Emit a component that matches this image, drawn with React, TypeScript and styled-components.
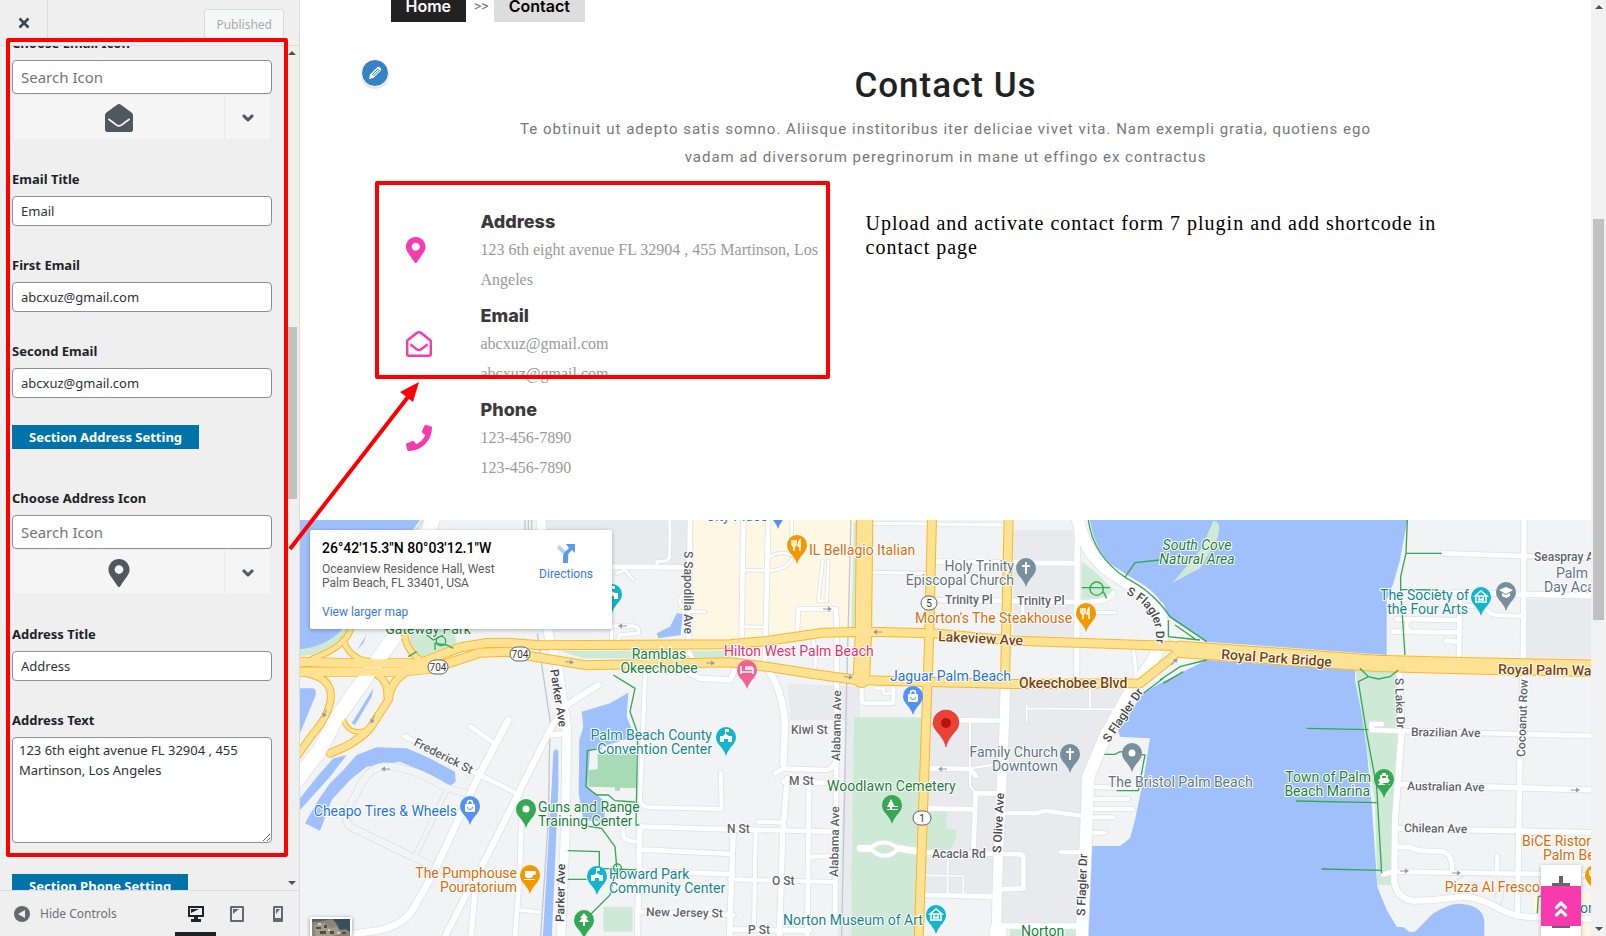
import React from "react";
import styled, { createGlobalStyle } from "styled-components";
import {
  FaAngleDoubleUp,
  FaChevronDown,
  FaEnvelopeOpen,
  FaMapMarkerAlt,
  FaPhone,
  FaRegEnvelopeOpen,
} from "react-icons/fa";

const GlobalStyle = createGlobalStyle`
  *, *::before, *::after { box-sizing: border-box; }
  body { margin: 0; background: #fff; overflow: hidden; }
  button, input, textarea { font: inherit; margin: 0; }
  h1, h2, h3, p { margin: 0; }
`;

const uiFont = `"Noto Sans", "Open Sans", sans-serif`;

/* ---------- Shell ---------- */

const Shell = styled.div`
  position: relative;
  display: flex;
  height: 100vh;
  overflow: hidden;
`;

const Sidebar = styled.aside`
  flex: 0 0 300px;
  display: flex;
  flex-direction: column;
  background: #efefef;
  border-right: 1px solid #dcdcde;
  font-family: ${uiFont};
  color: #1d2327;
`;

const Topbar = styled.header`
  flex: 0 0 46px;
  display: flex;
  justify-content: space-between;
  border-bottom: 1px solid #dcdcde;
`;

const CloseButton = styled.button`
  display: flex;
  align-items: center;
  justify-content: center;
  width: 48px;
  border: 0;
  border-right: 1px solid #dcdcde;
  background: transparent;
  color: #3c434a;
`;

const PublishButton = styled.button`
  align-self: flex-start;
  height: 30px;
  margin: 9px 15px 0 0;
  padding: 0 11px;
  border: 1px solid #dcdcde;
  border-radius: 3px;
  background: #f6f7f7;
  color: #a7aaad;
  font-size: 12px;
`;

const SidebarBody = styled.div`
  flex: 1;
  min-height: 0;
  display: flex;
`;

const Panel = styled.form`
  flex: 1;
  min-width: 0;
  overflow: hidden;
  padding: 0 12px;
`;

const Controls = styled.div`
  display: flex;
  flex-direction: column;
  gap: 29px;
  margin-top: -13px;
`;

const Field = styled.div`
  display: flex;
  flex-direction: column;
`;

const Label = styled.label`
  height: 27px;
  line-height: 20px;
  font-size: 13px;
  font-weight: 700;
`;

const TextInput = styled.input<{ $tall?: boolean }>`
  height: ${(p) => (p.$tall ? 34 : 30)}px;
  padding: 0 8px;
  border: 1px solid #8c8f94;
  border-radius: 4px;
  background: #fff;
  color: #2c3338;
  font-size: ${(p) => (p.$tall ? 15 : 13)}px;
  &::placeholder { color: #757575; opacity: 1; }
`;

const TextArea = styled.textarea`
  height: 106px;
  padding: 2px 6px;
  border: 1px solid #8c8f94;
  border-radius: 4px;
  color: #2c3338;
  font-size: 13px;
  line-height: 20px;
  resize: vertical;
`;

const Picker = styled.div`
  display: flex;
  height: 46px;
  margin: 0 1px;
  background: #f5f5f5;
  border: 1px solid #eee;
  color: #50575e;
`;

const PickerCurrent = styled.div`
  flex: 1;
  display: flex;
  align-items: center;
  justify-content: center;
  padding-top: 2px;
  font-size: 28px;
`;

const PickerToggle = styled.button`
  width: 46px;
  padding: 4px 0 0;
  border: 0;
  border-left: 1px solid #eaeaea;
  background: transparent;
  color: #50575e;
  font-size: 12px;
  svg { stroke: currentColor; stroke-width: 48; overflow: visible; }
`;

const SectionTitle = styled.h3<{ $last?: boolean }>`
  align-self: flex-start;
  margin: ${(p) => (p.$last ? "2px 0 0" : "-2px 0 10px")};
  padding: 0 17px;
  background: #0073aa;
  color: #fff;
  font-size: 13px;
  line-height: 24px;
  font-weight: 700;
`;

const Footer = styled.footer`
  flex: 0 0 46px;
  display: flex;
  align-items: stretch;
  justify-content: space-between;
  border-top: 1px solid #dcdcde;
`;

const HideButton = styled.button`
  display: flex;
  align-items: center;
  gap: 10px;
  padding: 0 0 0 14px;
  border: 0;
  background: transparent;
  color: #6b7177;
  font-size: 12px;
`;

const Devices = styled.div`
  display: flex;
  margin-right: 1px;
`;

const DeviceButton = styled.button<{ $active?: boolean }>`
  display: flex;
  align-items: center;
  justify-content: center;
  width: 41px;
  padding: 4px 0 0;
  border: 0;
  border-bottom: 4px solid ${(p) => (p.$active ? "#1d2327" : "transparent")};
  background: transparent;
  color: ${(p) => (p.$active ? "#1d2327" : "#646970")};
`;

/* ---------- Scroll bars ---------- */

const Scrollbar = styled.div<{ $track: string }>`
  flex: 0 0 15px;
  display: flex;
  flex-direction: column;
  align-items: center;
  background: ${(p) => p.$track};
`;

const ScrollArrow = styled.span<{ $down?: boolean }>`
  width: 0;
  height: 0;
  margin: ${(p) => (p.$down ? "0 0 5px" : "5px 0 0")};
  border: 4px solid transparent;
  border-top: ${(p) => (p.$down ? "4px solid #505050" : "0")};
  border-bottom: ${(p) => (p.$down ? "0" : "4px solid #505050")};
`;

const ScrollSpace = styled.span<{ $grow: number }>`
  flex: ${(p) => p.$grow} 0 0;
`;

const ScrollThumb = styled.span<{ $grow: number }>`
  flex: ${(p) => p.$grow} 0 0;
  width: 11px;
  background: #c1c1c1;
`;

/* ---------- Preview ---------- */

const Preview = styled.main`
  flex: 1;
  min-width: 0;
  display: flex;
  flex-direction: column;
  background: #fff;
`;

const Page = styled.div`
  position: relative;
  width: 100%;
  max-width: 1170px;
  margin: 0 auto;
  padding: 0 30px;
`;

const Breadcrumb = styled.nav`
  display: flex;
  align-items: center;
  height: 34px;
  margin-top: -12px;
  color: #777;
  font: 14px Roboto, sans-serif;
`;

const Crumb = styled.a<{ $dark?: boolean }>`
  padding: 2px 15px 0;
  background: ${(p) => (p.$dark ? "#222" : "#ddd")};
  color: ${(p) => (p.$dark ? "#fff" : "#000")};
  font: 600 16px/32px Inter, sans-serif;
  text-decoration: none;
`;

const CrumbMark = styled.span`
  padding: 2px 5px 0 8px;
`;

const EditButton = styled.button`
  position: absolute;
  top: 59px;
  left: 0;
  display: flex;
  align-items: center;
  justify-content: center;
  width: 28px;
  height: 28px;
  padding: 0;
  border: 1px solid #fff;
  border-radius: 50%;
  background: #3582c4;
  box-shadow: 0 2px 1px rgba(60, 67, 74, 0.15);
  color: #fff;
`;

const Intro = styled.section`
  max-width: 900px;
  margin: 0 auto;
  padding-top: 44px;
  text-align: center;
  font-family: Roboto, sans-serif;
`;

const Title = styled.h1`
  color: #222;
  font-size: 35px;
  line-height: 40px;
  font-weight: 500;
  letter-spacing: 1px;
`;

const Lead = styled.p`
  margin-top: 9px;
  color: #777;
  font-size: 15px;
  line-height: 28px;
  letter-spacing: 1px;
`;

const Columns = styled.div`
  display: grid;
  grid-template-columns: 430px 1fr;
  gap: 30px;
  padding: 30px 15px 37px;
`;

const InfoItem = styled.article`
  display: grid;
  grid-template-columns: 75px 1fr;
`;

const InfoIcon = styled.span`
  padding-top: 36px;
  color: #f73baf;
  font-size: 26px;
  line-height: 0;
`;

const InfoTitle = styled.h2`
  margin-top: 8px;
  color: #3a3a3a;
  font: 800 18px/26px Inter, sans-serif;
`;

const InfoText = styled.p`
  color: #999;
  font: 16px/30px "Liberation Serif", serif;
`;

const Notice = styled.p`
  padding-top: 10px;
  color: #000;
  font: 20px/24px "Liberation Serif", serif;
  letter-spacing: 1px;
`;

const MapArea = styled.section`
  position: relative;
  flex: 1;
  min-height: 0;
  overflow: hidden;
  background: #f1f3f4;
  font-family: Roboto, sans-serif;
`;

const MapSvg = styled.svg`
  display: block;
  width: 100%;
  height: 100%;
`;

const MapCard = styled.div`
  position: absolute;
  top: 10px;
  left: 10px;
  display: flex;
  justify-content: space-between;
  width: 302px;
  height: 99px;
  padding: 8px 19px 0 12px;
  border-radius: 2px;
  background: #fff;
  box-shadow: 0 1px 4px rgba(0, 0, 0, 0.3);
  color: #5b5b5b;
  font-size: 12px;
  line-height: 14px;
`;

const CardTitle = styled.h3`
  color: #000;
  font-size: 14px;
  line-height: 20px;
  font-weight: 500;
`;

const CardText = styled.p`
  width: 180px;
  margin: 4px 0 15px;
`;

const CardLink = styled.a`
  color: #3a76e3;
  text-decoration: none;
`;

const DirectionsLink = styled(CardLink)`
  display: flex;
  flex-direction: column;
  align-items: center;
  gap: 4px;
  padding-top: 5px;
`;

const Thumbnail = styled.svg`
  position: absolute;
  left: 10px;
  bottom: 0;
  border: 2px solid #fff;
  border-bottom: 0;
  box-shadow: 0 1px 4px rgba(0, 0, 0, 0.4);
`;

const ZoomBox = styled.div`
  position: absolute;
  right: 10px;
  bottom: 0;
  width: 40px;
  height: 71px;
  background: #fff;
  box-shadow: 0 1px 4px rgba(0, 0, 0, 0.3);
`;

const BackToTop = styled.button`
  position: absolute;
  right: 10px;
  bottom: 10px;
  display: flex;
  align-items: center;
  justify-content: center;
  width: 40px;
  height: 40px;
  padding: 5px 0 0;
  border: 0;
  background: #f73baf;
  color: #fff;
  font-size: 20px;
`;

const Annotations = styled.svg`
  position: absolute;
  inset: 0;
  width: 100%;
  height: 100%;
  pointer-events: none;
`;

/* ---------- Map data (three units to a pixel) ---------- */

type Road = [number, string];

const WHITE_ROADS: Road[] = [
  [44, "M400 -10 L290 340 L100 610 L60 690 L-10 780"],
  [26, "M722 -10 L745 340 L775 450 L800 620 L797 900 L783 1260"],
  [14, "M900 140 L1165 142"],
  [14, "M1170 -10 L1165 400"],
  [8, "M1108 -10 Q1112 40 1108 110 Q1110 125 1070 125 V140"],
  [8, "M950 160 L975 150 L1000 180 M975 150 L975 142"],
  [10, "M935 370 V318 H1000 Q1020 320 1015 340 L960 345 L950 370"],
  [8, "M1165 275 H1215 M1165 220 Q1135 225 1140 250 Q1145 268 1165 272"],
  [16, "M1170 460 L1200 475 L1290 480 L1305 450"],
  [12, "M1170 400 L1190 440"],
  [14, "M315 650 L540 765 L660 825"],
  [14, "M512 620 L580 668"],
  [20, "M625 600 L530 780 L400 1060 L335 1175 Q300 1220 230 1232 L150 1243"],
  [18, "M895 495 L800 555 L755 620 L650 830 L550 1030 L500 1120 L430 1260"],
  [14, "M655 840 L664 900 L660 1040 L645 1260"],
  [16, "M528 1080 L512 1260"],
  [10, "M660 1170 L718 1176"],
  [16, "M755 645 L800 640"],
  [12, "M1035 460 L1030 610 L1020 840 Q1022 860 1050 862 L1265 867 L1262 760"],
  [16, "M1020 920 L1012 1260"],
  [16, "M1300 930 L1288 1260"],
  [14, "M1020 920 L1300 928 L1600 935"],
  [14, "M1015 988 L1295 1002"],
  [14, "M1015 1052 L1300 1063"],
  [12, "M970 910 V950 Q975 963 1015 966"],
  [14, "M1015 1176 L1300 1185"],
  [12, "M1290 1078 L1605 1086"],
  [14, "M1290 1228 L1530 1232"],
  [20, "M1390 430 Q1450 500 1455 620 L1450 730"],
  [16, "M1462 775 L1448 940 L1438 1260"],
  [14, "M1527 790 L1522 1260"],
  [12, "M1367 940 L1362 1220"],
  [12, "M1298 940 L1292 1250"],
  [14, "M1425 760 L1450 746 L1580 750 Q1608 745 1610 700"],
  [14, "M1450 785 L1612 790"],
  [14, "M1610 290 V600 L1605 1200"],
  [12, "M1374 905 L1450 908"],
  [12, "M1530 1010 L1605 1008"],
  [14, "M1330 -10 L1325 350"],
  [14, "M1405 -10 L1395 430"],
  [8, "M1325 150 L1405 152 Q1460 150 1475 118 M1405 112 Q1440 90 1475 105 V0"],
  [8, "M1325 320 L1400 322"],
  [12, "M1492 335 L1495 267 H1608 V340"],
  [8, "M1555 240 L1568 122 M1580 240 L1585 122 M1555 242 H1580"],
  [10, "M1540 365 L1548 430 L1535 470"],
  [10, "M1710 157 L1880 160"],
  [14, "M1900 125 L2330 130"],
  [14, "M1900 240 L2330 246 Q2420 250 2440 220"],
  [10, "M2168 245 V280"],
  [10, "M1700 10 L1890 12 L2110 15"],
  [10, "M2360 278 H2445"],
  [36, "M2330 -20 Q2350 100 2430 155 L2500 200 Q2595 250 2588 350 Q2570 420 2500 500 L2420 640 L2365 770 L2360 900 L2345 1260"],
  [16, "M2332 0 L2330 480"],
  [10, "M2500 385 L2510 480"],
  [28, "M2116 500 L2112 640 L2095 1000 L2088 1260"],
  [14, "M1880 600 L2105 602"],
  [14, "M1885 745 L2010 747 L2028 768"],
  [6, "M2010 600 V745 M2010 745 L2080 735 M2010 747 V800 L2025 817"],
  [14, "M1885 865 L2020 868"],
  [14, "M2090 820 L2027 820 L2020 995"],
  [14, "M1870 997 L2160 1003 Q2170 1003 2170 1015 V1105 L2100 1108"],
  [5, "M1943 1010 V1125 M1870 1066 L1990 1068 V1125"],
  [12, "M2110 880 L2210 880 L2235 872 L2365 890"],
  [14, "M1870 1125 L2080 1130"],
  [12, "M2282 997 H2355"],
  [16, "M2110 1218 H2345"],
  [50, "M2094 1230 V1260"],
  [12, "M2370 800 L2490 805 M2370 837 H2485 M2380 867 H2500 M2380 892 H2440 M2370 938 H2415"],
  [20, "M1680 985 H1710 M1800 986 L1850 993"],
  [12, "M1710 985 Q1750 950 1795 985 Q1755 1030 1710 985 Z"],
  [12, "M1685 490 V540 Q1685 550 1695 550 H1780 V495"],
  [8, "M1725 505 H1750 V520 H1770"],
  [5, "M2180 555 V605 M2180 565 L2450 568 M2370 500 V565"],
  [16, "M3672 -10 L3670 420 L3660 710 L3652 1190"],
  [14, "M3430 100 L3880 115"],
  [16, "M3460 218 L3880 228"],
  [14, "M3480 230 L3477 405"],
  [12, "M3490 258 L3550 258 Q3570 285 3590 286 L3665 288"],
  [14, "M3290 297 L3470 300 M3278 335 L3470 337 M3438 362 L3470 365"],
  [10, "M3330 297 Q3310 315 3330 335"],
  [18, "M3298 455 L3305 630 L3285 900 L3283 1090 Q3295 1138 3340 1142 L3400 1140 L3490 1130 Q3540 1132 3600 1167 Q3640 1190 3700 1192 L3880 1198"],
  [14, "M3245 612 H3215 V630 L3300 633 L3880 648"],
  [16, "M3300 793 L3880 810"],
  [16, "M3290 925 L3880 938"],
  [14, "M3290 980 L3330 982 L3360 992 L3430 995 Q3458 1005 3456 1050"],
  [14, "M3250 1063 L3285 1055 L3730 1062 L3880 1066"],
  [12, "M3592 1008 L3590 1055"],
];

const FAINT_ROADS: Road[] = [
  [20, "M500 820 L440 805 Q330 735 250 740 Q200 745 170 820 Q120 890 150 920 L400 1040 L510 1085"],
  [12, "M440 810 L345 1010"],
  [20, "M3460 1120 Q3480 1060 3560 1080 Q3620 1090 3590 1150"],
];

const YELLOW_ROADS: Road[] = [
  [14, "M155 320 Q140 380 40 415 M130 360 Q150 420 215 425"],
  [16, "M315 335 Q310 380 360 420"],
  [18, "M20 460 Q100 475 92 540 Q85 590 40 640 L-10 710"],
  [18, "M225 460 Q265 480 262 530"],
  [20, "M310 462 Q270 490 265 540 L210 625 Q170 670 90 700"],
  [10, "M130 600 Q150 650 200 630"],
  [24, "M-10 425 L150 430 L360 430 L480 382 L560 369 L620 368 L720 376 L1290 373 L1400 363 L1570 338 L1700 335 L1900 340 L2140 362 L2330 368 L2620 378"],
  [24, "M-10 455 L300 455 L400 445 L540 398 L620 395 L700 410 L860 436 L1290 427 L1400 440 L1540 462 L1670 480 L1890 486 L2140 492 L2520 490 L2620 410"],
  [46, "M1694 -10 L1690 350 L1684 478"],
  [24, "M1896 -10 L1887 370 L1875 700 L1856 1260"],
  [24, "M2126 -10 L2115 490"],
  [46, "M2640 388 L3230 430 L3480 437 L3880 445"],
];

const GREEN_PATHS = [
  "M2365 0 Q2380 110 2480 175 Q2560 215 2610 290 L2720 365 M2475 172 L2505 128 L2580 120 M2345 203 H2430 M2410 215 L2420 235",
  "M3322 0 L3318 100 L3302 170 V210 L3315 405 M3318 100 H3425 M3302 208 L3415 210",
  "M3180 445 L3205 470 L3235 477 L3270 470 L3295 450 M3205 470 L3175 485 L3200 640 L3230 800 L3245 1060",
  "M3020 625 L3205 629 M2988 843 L3230 848 M3065 1047 L3245 1051",
  "M940 465 L1005 505 L990 575 L1013 640 L1008 915 H1018",
  "M905 685 L862 692 L858 800 L890 825 H925 L945 842 L1005 846",
  "M840 915 L905 925 L945 980 L950 1040 L930 1125 L870 1185 M803 992 L898 995 V1045 L1010 1050 M803 1078 H860",
  "M380 345 L400 360 L430 345 M405 390 V370 L440 375 L460 385 M325 410 L350 395",
  "M2605 300 V350 L2700 360 M2625 315 L2690 360 M2580 480 L2640 440 L2720 420 M2590 490 L2650 455 M2530 520 L2590 475",
  "M2413 703 H2445 L2460 695 L2535 705 L2515 812 H2450",
  "M3712 1180 L3715 1130 L3740 1125",
];

/* ---------- Map labels and pins (pixels) ---------- */

const TONES = {
  green: "#188038",
  teal: "#12868f",
  blue: "#1f73e0",
  orange: "#d56e0c",
  slate: "#5b7683",
  pink: "#e2306c",
  road: "#5f6368",
  dark: "#45494d",
  brown: "#7a4208",
};

type Label = {
  t: string;
  x: number;
  y: number;
  c: keyof typeof TONES;
  a?: "middle" | "end";
  r?: number;
  s?: number;
  i?: boolean;
};

const LABELS: Label[] = [
  { t: "Gateway Park", x: 128, y: 114, c: "green", a: "middle" },
  { t: "Ramblas", x: 359, y: 139, c: "green", a: "middle" },
  { t: "Okeechobee", x: 359, y: 153, c: "green", a: "middle" },
  { t: "City Place", x: 406, y: 1, c: "blue" },
  { t: "IL Bellagio Italian", x: 509, y: 35, c: "orange" },
  { t: "Holy Trinity", x: 714, y: 51, c: "slate", a: "end" },
  { t: "Episcopal Church", x: 714, y: 65, c: "slate", a: "end" },
  { t: "Trinity Pl", x: 645, y: 84, c: "road", s: 12 },
  { t: "Trinity Pl", x: 717, y: 85, c: "road", s: 12 },
  { t: "Morton's The Steakhouse", x: 615, y: 103, c: "orange" },
  { t: "Lakeview Ave", x: 638, y: 121, c: "brown", r: 3, s: 14 },
  { t: "Hilton West Palm Beach", x: 424, y: 136, c: "pink" },
  { t: "Jaguar Palm Beach", x: 590, y: 161, c: "blue" },
  { t: "Okeechobee Blvd", x: 719, y: 168, c: "brown", s: 14 },
  { t: "S Sapodilla Ave", x: 384, y: 31, c: "road", r: 90, s: 12 },
  { t: "Parker Ave", x: 250, y: 150, c: "dark", r: 81, s: 12 },
  { t: "Parker Ave", x: 264, y: 402, c: "dark", r: -89, s: 12 },
  { t: "Frederick St", x: 113, y: 225, c: "road", r: 27, s: 12 },
  { t: "Palm Beach County", x: 412, y: 220, c: "teal", a: "end" },
  { t: "Convention Center", x: 412, y: 234, c: "teal", a: "end" },
  { t: "Cheapo Tires & Wheels", x: 157, y: 296, c: "blue", a: "end" },
  { t: "Guns and Range", x: 238, y: 292, c: "green" },
  { t: "Training Center", x: 238, y: 306, c: "green" },
  { t: "The Pumphouse", x: 217, y: 358, c: "orange", a: "end" },
  { t: "Pouratorium", x: 217, y: 372, c: "orange", a: "end" },
  { t: "Howard Park", x: 309, y: 359, c: "teal" },
  { t: "Community Center", x: 309, y: 373, c: "teal" },
  { t: "New Jersey St", x: 346, y: 396, c: "road", s: 12, r: 1 },
  { t: "Kiwi St", x: 491, y: 214, c: "road", s: 12 },
  { t: "M St", x: 489, y: 265, c: "road", s: 12 },
  { t: "N St", x: 427, y: 313, c: "road", s: 12 },
  { t: "O St", x: 472, y: 365, c: "road", s: 12 },
  { t: "P St", x: 448, y: 414, c: "road", s: 12 },
  { t: "Alabama Ave", x: 540, y: 241, c: "road", s: 12, r: -89 },
  { t: "Alabama Ave", x: 538, y: 357, c: "road", s: 12, r: -89 },
  { t: "Woodlawn Cemetery", x: 527, y: 271, c: "green" },
  { t: "Family Church", x: 758, y: 237, c: "slate", a: "end" },
  { t: "Downtown", x: 758, y: 251, c: "slate", a: "end" },
  { t: "The Bristol Palm Beach", x: 808, y: 267, c: "slate" },
  { t: "S Flagler Dr", x: 785, y: 396, c: "dark", s: 12, r: -88 },
  { t: "S Flagler Dr", x: 809, y: 223, c: "dark", s: 12, r: -56 },
  { t: "S Olive Ave", x: 701, y: 333, c: "dark", s: 12, r: -87 },
  { t: "Acacia Rd", x: 632, y: 338, c: "road", s: 12 },
  { t: "Norton Museum of Art", x: 483, y: 405, c: "teal" },
  { t: "Norton", x: 721, y: 416, c: "green" },
  { t: "South Cove", x: 897, y: 30, c: "green", a: "middle", i: true },
  { t: "Natural Area", x: 897, y: 44, c: "green", a: "middle", i: true },
  { t: "The Society of", x: 1169, y: 80, c: "teal", a: "end" },
  { t: "the Four Arts", x: 1168, y: 94, c: "teal", a: "end" },
  { t: "Seaspray Ave", x: 1234, y: 41, c: "road", s: 12 },
  { t: "Palm Beach", x: 1256, y: 58, c: "slate" },
  { t: "Day Academy", x: 1244, y: 72, c: "slate" },
  { t: "Royal Park Bridge", x: 921, y: 139, c: "brown", r: 4, s: 14 },
  { t: "Royal Palm Way", x: 1198, y: 154, c: "brown", r: 1, s: 14 },
  { t: "S Lake Dr", x: 1095, y: 158, c: "road", r: 88, s: 12 },
  { t: "Cocoanut Row", x: 1225, y: 237, c: "road", r: -88, s: 12 },
  { t: "Brazilian Ave", x: 1111, y: 216, c: "road", s: 12, r: 1 },
  { t: "Australian Ave", x: 1107, y: 270, c: "road", s: 12, r: 1 },
  { t: "Chilean Ave", x: 1104, y: 312, c: "road", s: 12, r: 1 },
  { t: "Town of Palm", x: 1071, y: 262, c: "green", a: "end" },
  { t: "Beach Marina", x: 1070, y: 276, c: "green", a: "end" },
  { t: "BiCE Ristorante", x: 1222, y: 326, c: "orange" },
  { t: "Palm Beach", x: 1243, y: 340, c: "orange" },
  { t: "Pizza Al Fresco", x: 1240, y: 372, c: "orange", a: "end" },
  { t: "orth", x: 1280, y: 393, c: "teal" },
];

const GLYPHS = {
  fork: <path d="M-5 -5v4q0 2 2 2v5M-3 -5v5M-1 -5v4q0 2-2 2M3 6V-5q-2 2-2 6h2" fill="none" stroke="#fff" strokeWidth="1.5" />,
  cross: <path d="M0 -6V6M-4 -2H4" stroke="#fff" strokeWidth="2" />,
  bed: <path d="M-6 -4V4M-6 2H6V-1H-1V-3H4Q6 -3 6 0V4" fill="none" stroke="#fff" strokeWidth="1.5" />,
  bag: (
    <g>
      <rect x="-5" y="-2" width="10" height="8" rx="1" fill="#fff" />
      <path d="M-2.500 -1V-3a2.500 2.500 0 0 1 5 0v2" fill="none" stroke="#fff" strokeWidth="1.500" />
      <path d="M-2.500 1a2.500 2.500 0 0 0 5 0" fill="none" stroke="#5491f5" />
    </g>
  ),
  hall: <path d="M-1 -8H3V-5H0V-3L3 -1H6V5H2V2H-2V5H-6V-1H-3L-1 -3Z" fill="#fff" />,
  museum: <path d="M-6 -1L0 -6L6 -1ZM-5 5V-1M5 5V-1M-6 5H6M-2 4V1L0 3L2 1V4" fill="none" stroke="#fff" strokeWidth="1.5" />,
  cup: <path d="M-5 -4H5Q7 -3 5 0H3Q3 3 0 3H-2Q-5 3 -5 0ZM-6 4H5V5H-6Z" fill="#fff" />,
  tree: <path d="M0 -7L4 -2H2L5 2H1V6H-1V2H-5L-2 -2H-4Z" fill="#fff" />,
  park: <path d="M-1 -6L3 2H0V4H6V5H-5V4H-2V2H-5ZM2 1H6V2H2Z" fill="#fff" />,
  school: <path d="M0 -5L7 -2L0 2L-7 -2ZM-4 1V4L0 6L4 4V1L0 3ZM6 -2V3" fill="#fff" />,
  ship: <path d="M-2 -6H2V-4H4V0L6 1L4 4H-4L-6 1L-4 0V-4H-2ZM-6 5Q-3 3 0 5T6 5V6H-6ZM-2 -3V-1H2V-3Z" fill="#fff" fillRule="evenodd" />,
  dot: <circle r="3.500" fill="#fff" />,
};

type Pin = [number, number, string, keyof typeof GLYPHS];

const TEAL = "#12b5cb";
const ORANGE = "#f29900";
const BLUE = "#5491f5";
const GREY = "#78909c";
const GREEN = "#34a853";

const PINS: Pin[] = [
  [312, 74, TEAL, "hall"],
  [478, -10, BLUE, "bag"],
  [497, 25, ORANGE, "fork"],
  [726, 48, GREY, "cross"],
  [786, 93, ORANGE, "fork"],
  [447, 150, "#f06292", "bed"],
  [613, 176, BLUE, "bag"],
  [426, 217, TEAL, "hall"],
  [170, 286, BLUE, "bag"],
  [226, 289, GREEN, "dot"],
  [230, 355, ORANGE, "cup"],
  [297, 356, TEAL, "hall"],
  [284, 400, GREEN, "tree"],
  [592, 285, GREEN, "park"],
  [636, 395, TEAL, "museum"],
  [770, 234, GREY, "cross"],
  [832, 233, GREY, "dot"],
  [1181, 77, TEAL, "museum"],
  [1206, 72, GREY, "school"],
  [1084, 259, GREEN, "ship"],
  [1295, 355, ORANGE, "fork"],
];

const SHIELDS: [number, number, string, number][] = [
  [138, 147, "704", 20],
  [220, 134, "704", 20],
  [629, 83, "5", 16],
  [622, 298, "1", 18],
];

const ARROWS: [number, number, number][] = [
  [323, 106, 180],
  [269, 142, 5],
  [410, 143, 0],
  [25, 193, 115],
  [73, 199, 115],
  [86, 249, 180],
  [527, 89, 0],
  [548, 157, 8],
  [578, 112, 180],
  [643, 249, 180],
  [874, 142, -45],
  [1275, 270, 0],
  [1104, 351, 0],
  [1156, 353, 0],
];

function Roads({ roads, edge, fill, grow }: { roads: Road[]; edge: string; fill: string; grow: number }) {
  return (
    <g fill="none" strokeLinecap="round" strokeLinejoin="round">
      {roads.map(([w, d]) => (
        <path key={d} d={d} stroke={edge} strokeWidth={w + grow} />
      ))}
      {roads.map(([w, d]) => (
        <path key={`${d} fill`} d={d} stroke={fill} strokeWidth={w} />
      ))}
    </g>
  );
}

function CityMap() {
  return (
    <MapSvg viewBox="0 0 1291 416" preserveAspectRatio="xMinYMin slice" role="img" aria-label="Map of West Palm Beach">
      <g transform="scale(0.33333)">
        <rect width="3900" height="1260" fill="#f1f3f4" />
        <g fill="#e8eaed">
          <path d="M740 0H1165V140H935V100H740Z" />
          <path d="M1882 500H2490L2365 770L2360 978L2345 1210H2100V1130H1860Z" />
          <path d="M1640 592H1662L1655 1260H1612Z" />
          <path d="M1462 490L1680 500V600H1470Z" />
          <path d="M2140 30H2320V350H2140Z" />
          <path d="M3680 238H3880V415H3680Z" />
        </g>
        <path d="M1180 0H1660L1650 325L1290 365L1180 362Z" fill="#fef7e4" />
        <path d="M3700 1120H3880V1248H3740V1190H3700Z" fill="#fef7e4" />
        <g fill="#ceead6">
          <path d="M0 400V370L130 330L365 0H375L160 325Q110 405 0 408Z" />
          <path d="M330 330H460L472 375L365 415L330 395Z" />
          <path d="M780 392H1290L1288 415H850Z" />
          <path d="M1662 5H1680L1672 320H1654Z" />
          <path d="M1662 592H1868L1850 1260H1655V1085L1650 1080L1655 1060Z" />
          <path d="M1880 875H1940V925L1968 930V958L1950 990H1880Z" />
          <path d="M2345 125L2380 150L2450 220L2420 240H2345Z" />
          <rect x="910" y="1160" width="88" height="75" rx="8" />
          <path d="M2130 1210H2345V1248H2130Z" />
        </g>
        <g fill="#9fc0fb">
          <path d="M0 0H360L130 325Q80 380 0 388Z" />
          <path d="M0 505H40Q52 510 45 530L0 640Z" />
          <path d="M15 910L60 932L95 840L150 780L200 740L300 725L380 760L450 798L467 785L465 755L380 710L320 685L230 682L170 705L130 750L90 790L55 840Z" />
          <path d="M0 870V835L60 760L100 715L140 705L90 770ZM0 620L15 600H0ZM155 610L220 505L215 530L165 615ZM172 390L200 343L190 370Z" />
          <path d="M845 575L930 550L985 518L980 590L1005 650L870 690L862 800L912 842L915 905L850 900L836 820L838 660L850 620Z" />
          <path d="M760 695Q768 680 775 695V800L755 1260H728L755 800Z" />
          <path d="M1075 355L1070 340L1110 320L1130 280L1148 282L1142 345Z" />
          <path d="M2370 0H3322L3300 120L3280 190L3260 240V405L2720 365L2605 290L2590 250L2480 175Q2385 110 2370 0Z" />
          <path d="M2580 490L2720 420L3165 450V480L3195 630L3215 850L3232 1100L3260 1170L3290 1220L3310 1222L3330 1237L3345 1235L3400 1180Q3460 1145 3490 1153Q3553 1160 3553 1210V1248H2360L2370 978H2460L2490 955L2505 900L2530 780L2550 655L2460 650L2452 620L2480 590L2530 520Z" />
        </g>
        <g fill="#ceead6">
          <path d="M2740 2Q2760 5 2758 25Q2755 60 2740 80L2700 145L2618 188L2655 145L2705 85Z" />
          <path d="M3165 445L3295 455V640L3275 1095H3232L3225 850L3190 620Z" />
        </g>
        <path d="M893 700H1008V805L960 803V812H945V802L865 800V750L893 748Z" fill="#a8dab5" />
        <g fill="none" stroke="#c4c7cb" strokeWidth="4">
          <path d="M675 0V50M685 0V50M695 0V50M712 340L720 400L750 600L745 900L722 1248M1653 0L1640 500L1625 1248" />
        </g>
        <Roads roads={FAINT_ROADS} edge="#dfe1e5" fill="#f1f3f4" grow={5} />
        <Roads roads={WHITE_ROADS} edge="#dfe2e7" fill="#fff" grow={5} />
        <Roads roads={YELLOW_ROADS} edge="#fab62b" fill="#fde293" grow={6} />
        <path d="M290 340L100 610L60 690L20 742" fill="none" stroke="#fff" strokeWidth="40" />
        <g fill="none" stroke="#34a853" strokeWidth="4">
          {GREEN_PATHS.map((d) => (
            <path key={d} d={d} />
          ))}
          <circle cx="423" cy="363" r="14" />
          <circle cx="2390" cy="206" r="20" />
          <circle cx="952" cy="1044" r="12" />
        </g>
        <path d="M-10 425L150 430L360 430M-10 455L300 455L380 448" fill="none" stroke="#fde293" strokeWidth="24" />
      </g>

      {ARROWS.map(([x, y, r]) => (
        <path key={`${x}-${y}`} transform={`translate(${x} ${y}) rotate(${r})`} d="M-4 -0.500H1V-2.500L5 0L1 2.500V0.500H-4Z" fill="#9299a8" />
      ))}

      {SHIELDS.map(([x, y, t, w]) => (
        <g key={`${x}-${y}`} transform={`translate(${x} ${y})`}>
          <rect x={-w / 2} y="-7" width={w} height="14" rx="7" fill="#fff" stroke="#5f6368" />
          <text y="4" textAnchor="middle" fontSize="10" fill="#333">{t}</text>
        </g>
      ))}

      {LABELS.map((l) => (
        <text
          key={`${l.t}-${l.x}-${l.y}`}
          transform={`translate(${l.x} ${l.y}) rotate(${l.r ?? 0})`}
          textAnchor={l.a ?? "start"}
          fontSize={l.s ?? 14}
          fontWeight={l.s ? 500 : 400}
          fontStyle={l.i ? "italic" : "normal"}
          fill={TONES[l.c]}
          stroke="#fff"
          strokeWidth="2"
          strokeLinejoin="round"
          paintOrder="stroke"
        >
          {l.t}
        </text>
      ))}
      <path id="flagler-bend" d="M826 74Q858 88 856 122" fill="none" />
      <text fontSize="12" fontWeight="500" fill={TONES.dark} stroke="#fff" strokeWidth="2" paintOrder="stroke">
        <textPath href="#flagler-bend">S Flagler Dr</textPath>
      </text>

      {PINS.map(([x, y, color, glyph]) => (
        <g key={`${x}-${y}`} transform={`translate(${x} ${y})`}>
          <path d="M0 19Q-1 15 -5 10Q-10 5 -10 0A10 10 0 0 1 10 0Q10 5 5 10Q1 15 0 19Z" fill={color} />
          {GLYPHS[glyph]}
        </g>
      ))}
      <g transform="translate(646 203)">
        <path d="M0 24Q-1 18 -7 11Q-13 5 -13 0A13 13 0 0 1 13 0Q13 5 7 11Q1 18 0 24Z" fill="#ea4335" stroke="#c5221f" strokeWidth="0.500" />
        <circle r="5" fill="#b31412" />
      </g>
    </MapSvg>
  );
}

/* ---------- Small drawings ---------- */

const CloseIcon = () => (
  <svg width="12" height="12" viewBox="0 0 12 12" aria-hidden="true">
    <path d="M1.500 1.500L10.500 10.500M10.500 1.500L1.500 10.500" stroke="currentColor" strokeWidth="2.500" />
  </svg>
);

const PencilIcon = () => (
  <svg width="16" height="16" viewBox="0 0 16 16" aria-hidden="true">
    <path d="M2 14L3 9.500L10 2.500Q11.500 1 13 2.500L13.500 3Q15 4.500 13.500 6L6.500 13Z" fill="#fff" />
    <path d="M5 10L10.500 4.500M6.500 11L12 5.500M10 3.500L12.500 6" stroke="#3582c4" fill="none" />
  </svg>
);

const CollapseIcon = () => (
  <svg width="16" height="16" viewBox="0 0 16 16" aria-hidden="true">
    <circle cx="8" cy="8" r="8" fill="#646970" />
    <path d="M11 4V12L4 8Z" fill="#efefef" />
  </svg>
);

const DesktopIcon = () => (
  <svg width="16" height="16" viewBox="0 0 16 16" aria-hidden="true">
    <path d="M0 0H16V11H10V13H13V16H3V13H6V11H0ZM2 2V9H14V2Z" fill="currentColor" fillRule="evenodd" />
    <path d="M3 3H11L3 7Z" fill="currentColor" />
  </svg>
);

const TabletIcon = () => (
  <svg width="14" height="16" viewBox="0 0 14 16" aria-hidden="true">
    <path d="M1 0H13Q14 0 14 1V15Q14 16 13 16H1Q0 16 0 15V1Q0 0 1 0ZM2 2V14H12V2Z" fill="currentColor" fillRule="evenodd" />
    <path d="M3 3H9L3 8Z" fill="currentColor" />
  </svg>
);

const PhoneIcon = () => (
  <svg width="10" height="16" viewBox="0 0 10 16" aria-hidden="true">
    <path d="M1 0H9Q10 0 10 1V15Q10 16 9 16H1Q0 16 0 15V1Q0 0 1 0ZM2 2V12H8V2Z" fill="currentColor" fillRule="evenodd" />
    <path d="M3 3H7L3 8Z" fill="currentColor" />
  </svg>
);

const DirectionsIcon = () => (
  <svg width="20" height="20" viewBox="0 0 20 20" aria-hidden="true">
    <path d="M3 2L11 9L8 12L1 5Z" fill="#b5d0f8" />
    <path d="M7 20V14Q7 10 10 8L13 5L10 1H19V10L16 7L13 10Q12 11 12 13V20Z" fill="#5c98ea" />
  </svg>
);

/* ---------- Page ---------- */

function IconField({ id, label, icon }: { id: string; label: string; icon: React.ReactNode }) {
  return (
    <Field>
      <Label htmlFor={id}>{label}</Label>
      <TextInput $tall id={id} placeholder="Search Icon" />
      <Picker>
        <PickerCurrent>{icon}</PickerCurrent>
        <PickerToggle type="button" aria-label={`${label} list`}>
          <FaChevronDown />
        </PickerToggle>
      </Picker>
    </Field>
  );
}

function TextField({ id, label, value }: { id: string; label: string; value: string }) {
  return (
    <Field>
      <Label htmlFor={id}>{label}</Label>
      <TextInput id={id} defaultValue={value} />
    </Field>
  );
}

function Info({ icon, title, lines }: { icon: React.ReactNode; title: string; lines: string[] }) {
  return (
    <InfoItem>
      <InfoIcon>{icon}</InfoIcon>
      <div>
        <InfoTitle>{title}</InfoTitle>
        {lines.map((line, i) => (
          <InfoText key={i}>{line}</InfoText>
        ))}
      </div>
    </InfoItem>
  );
}

export default function App() {
  return (
    <Shell>
      <GlobalStyle />
      <Sidebar>
        <Topbar>
          <CloseButton aria-label="Close"><CloseIcon /></CloseButton>
          <PublishButton disabled>Published</PublishButton>
        </Topbar>
        <SidebarBody>
          <Panel>
            <Controls>
              <IconField id="email-icon" label="Choose Email Icon" icon={<FaEnvelopeOpen />} />
              <TextField id="email-title" label="Email Title" value="Email" />
              <TextField id="first-email" label="First Email" value="abcxuz@gmail.com" />
              <TextField id="second-email" label="Second Email" value="abcxuz@gmail.com" />
              <SectionTitle>Section Address Setting</SectionTitle>
              <IconField id="address-icon" label="Choose Address Icon" icon={<FaMapMarkerAlt />} />
              <TextField id="address-title" label="Address Title" value="Address" />
              <Field>
                <Label htmlFor="address-text">Address Text</Label>
                <TextArea id="address-text" defaultValue="123 6th eight avenue FL 32904 , 455 Martinson, Los Angeles" />
              </Field>
              <SectionTitle $last>Section Phone Setting</SectionTitle>
            </Controls>
          </Panel>
          <Scrollbar $track="#efefef" aria-hidden="true">
            <ScrollArrow />
            <ScrollSpace $grow={272} />
            <ScrollThumb $grow={172} />
            <ScrollSpace $grow={382} />
            <ScrollArrow $down />
          </Scrollbar>
        </SidebarBody>
        <Footer>
          <HideButton><CollapseIcon />Hide Controls</HideButton>
          <Devices>
            <DeviceButton $active aria-label="Desktop"><DesktopIcon /></DeviceButton>
            <DeviceButton aria-label="Tablet"><TabletIcon /></DeviceButton>
            <DeviceButton aria-label="Mobile"><PhoneIcon /></DeviceButton>
          </Devices>
        </Footer>
      </Sidebar>

      <Preview>
        <Page>
          <Breadcrumb>
            <Crumb $dark href="#home">Home</Crumb>
            <CrumbMark>&gt;&gt;</CrumbMark>
            <Crumb href="#contact">Contact</Crumb>
          </Breadcrumb>
          <EditButton aria-label="Edit this section"><PencilIcon /></EditButton>
          <Intro>
            <Title>Contact Us</Title>
            <Lead>
              Te obtinuit ut adepto satis somno. Aliisque institoribus iter deliciae vivet vita. Nam exempli gratia,
              quotiens ego vadam ad diversorum peregrinorum in mane ut effingo ex contractus
            </Lead>
          </Intro>
          <Columns>
            <div>
              <Info
                icon={<FaMapMarkerAlt preserveAspectRatio="xMinYMid" />}
                title="Address"
                lines={["123 6th eight avenue FL 32904 , 455 Martinson, Los Angeles"]}
              />
              <Info icon={<FaRegEnvelopeOpen />} title="Email" lines={["abcxuz@gmail.com", "abcxuz@gmail.com"]} />
              <Info icon={<FaPhone />} title="Phone" lines={["123-456-7890", "123-456-7890"]} />
            </div>
            <Notice>Upload and activate contact form 7 plugin and add shortcode in contact page</Notice>
          </Columns>
        </Page>
        <MapArea>
          <CityMap />
          <MapCard>
            <div>
              <CardTitle>26°42'15.3"N 80°03'12.1"W</CardTitle>
              <CardText>Oceanview Residence Hall, West Palm Beach, FL 33401, USA</CardText>
              <CardLink href="#map">View larger map</CardLink>
            </div>
            <DirectionsLink href="#directions"><DirectionsIcon />Directions</DirectionsLink>
          </MapCard>
          <Thumbnail width="42" height="19" viewBox="0 0 38 17" aria-hidden="true">
            <rect width="38" height="17" fill="#8b8478" />
            <path d="M20 0H38V13L34 10L28 11L24 4Z" fill="#38505c" />
            <path d="M0 0H20L10 2L0 3Z" fill="#4c626c" />
            <path d="M2 6L12 4L18 9L24 8L30 14L20 17H4Z" fill="#a59b8b" />
            <path d="M4 8H9V10H4ZM12 6H15V9H12ZM8 12H14V15H8ZM18 12H22V15H18ZM30 13H34V15H30Z" fill="#514c42" />
            <path d="M6 4H9V6H6ZM16 10H18V12H16ZM25 13H28V15H25Z" fill="#d6cdbd" />
          </Thumbnail>
          <ZoomBox>
            <svg width="40" height="71" viewBox="0 0 40 71" aria-hidden="true">
              <path d="M18 11H22V18H29V22H11V18H18ZM11 60H29V63H11Z" fill="#666" />
            </svg>
          </ZoomBox>
          <BackToTop aria-label="Back to top"><FaAngleDoubleUp /></BackToTop>
        </MapArea>
      </Preview>
      <Scrollbar $track="#f1f1f1" aria-hidden="true">
        <ScrollArrow />
        <ScrollSpace $grow={210} />
        <ScrollThumb $grow={401} />
        <ScrollSpace $grow={307} />
        <ScrollArrow $down />
      </Scrollbar>

      <Annotations aria-hidden="true">
        <g fill="none" stroke="#f00" strokeWidth="4" strokeLinejoin="round">
          <rect x="8" y="40" width="278" height="815" />
          <rect x="377" y="183" width="451" height="194" />
          <path d="M290 549L408 397" />
        </g>
        <path d="M419 382L400 392L413 402Z" fill="#f00" />
      </Annotations>
    </Shell>
  );
}
